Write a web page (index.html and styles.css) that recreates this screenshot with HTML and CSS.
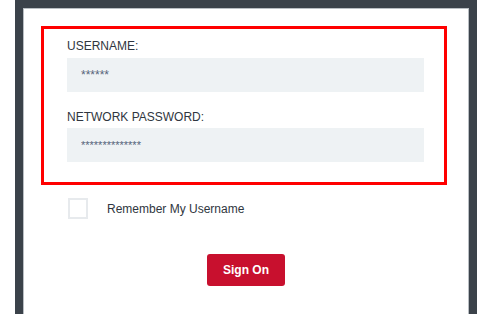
FILE: index.html
```html
<!DOCTYPE html>
<html lang="en">
<head>
  <meta charset="UTF-8" />
  <meta name="viewport" content="width=device-width, initial-scale=1.0"/>
  <title>Sign On</title>
  <link rel="stylesheet" href="styles.css">
</head>
<body>
  <div class="frame">
    <div class="panel">
      <div class="highlight">
        <label class="field-label" for="username">USERNAME:</label>
        <input type="text" class="input-box" id="username" value="******" readonly>
        <label class="field-label second" for="password">NETWORK PASSWORD:</label>
        <input type="text" class="input-box" id="password" value="**************" readonly>
      </div>

      <label class="remember">
        <input type="checkbox" class="check">
        <span>Remember My Username</span>
      </label>

      <div class="actions">
        <button class="btn">Sign On</button>
      </div>
    </div>
  </div>
</body>
</html>
```

FILE: styles.css
```css
* { margin: 0; padding: 0; box-sizing: border-box; font-family: 'Liberation Sans', Arial, sans-serif; }

html, body {
  background: #fff;
  height: 314px;
  overflow: hidden;
}

.frame {
  margin-left: 15px;
  width: 462px;
  height: 100%;
  padding: 8px 8px 0 8px;
  background: #3b424a;
}

.panel {
  height: 100%;
  background: #fff;
  border: 1px solid #b9bec3;
  border-bottom: none;
  padding: 17px 21px 0 17px;
}

.highlight {
  display: flex;
  flex-direction: column;
  border: 3px solid #ff0000;
  padding: 10px 20px 20px 23px;
  height: 159px;
}

.field-label {
  font-size: 12px;
  line-height: 14px;
  color: #2f3640;
  margin-bottom: 5px;
}

.field-label.second {
  margin-top: 18px;
  margin-bottom: 4px;
}

.input-box {
  width: 100%;
  height: 34px;
  border: none;
  outline: none;
  background: #eef2f4;
  padding: 0 14px;
  font-size: 12px;
  color: #56647a;
}

#password {
  font-size: 11px;
}

.remember {
  display: flex;
  align-items: center;
  gap: 19px;
  margin: 13px 0 0 27px;
  font-size: 12px;
  color: #2f3640;
}

.check {
  appearance: none;
  width: 20px;
  height: 21px;
  border: 2px solid #e7eaed;
  background: #fff;
}

.actions {
  display: flex;
  justify-content: center;
  margin-top: 35px;
  padding-left: 4px;
}

.btn {
  width: 78px;
  height: 32px;
  border: none;
  border-radius: 3px;
  background: #c8102e;
  color: #fff;
  font-size: 12px;
  font-weight: 600;
  cursor: pointer;
}
```
